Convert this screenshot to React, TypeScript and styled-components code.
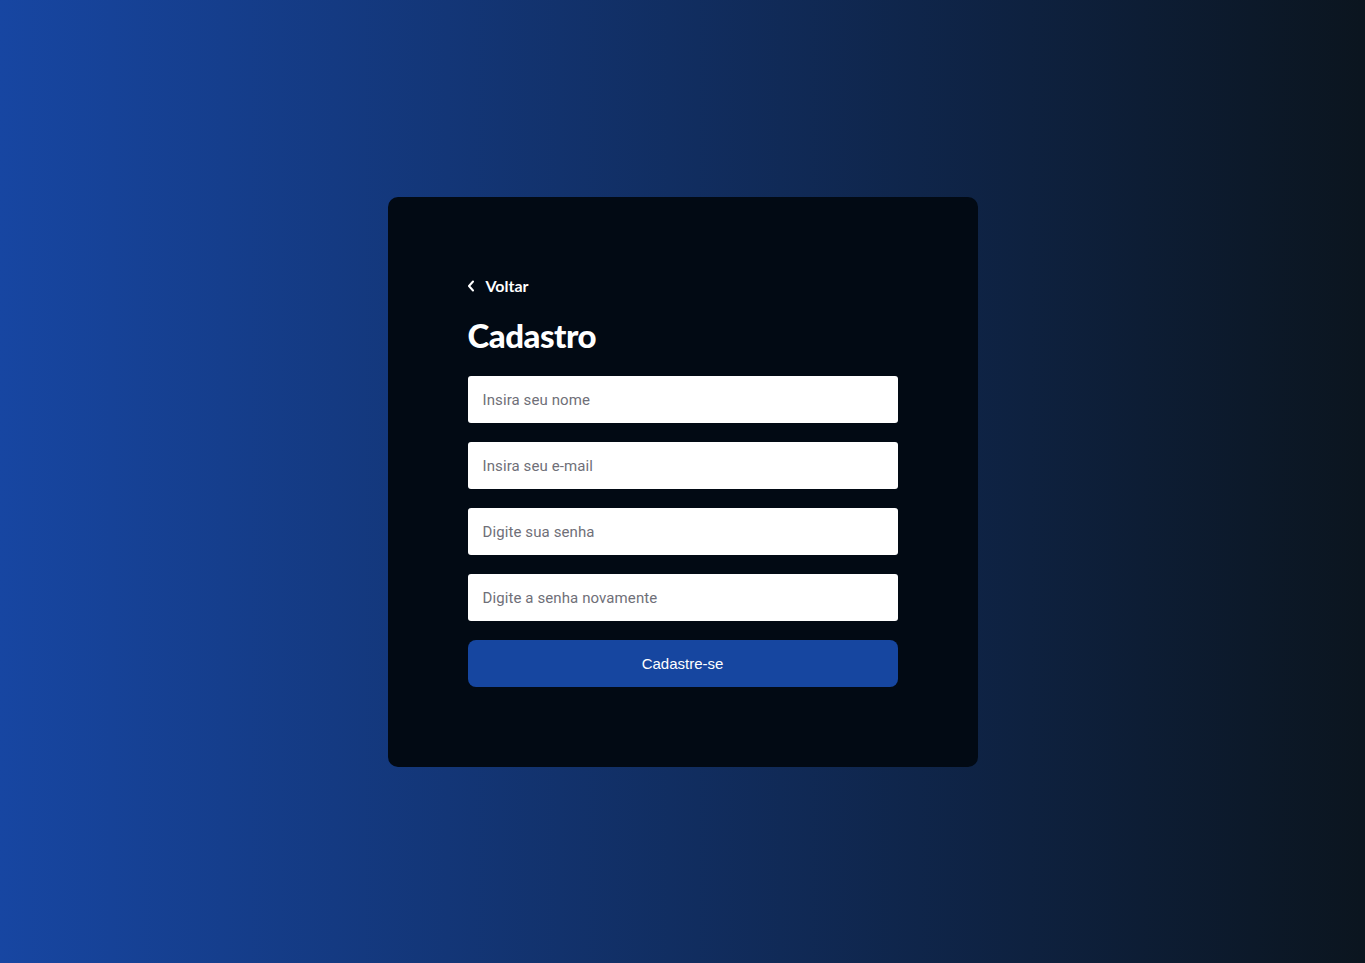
import React from "react";
import styled, { createGlobalStyle } from "styled-components";

const Global = createGlobalStyle`
  html, body { margin: 0; padding: 0; }
  body { font-family: "Roboto", "Liberation Sans", sans-serif; }
  * { box-sizing: border-box; }
`;

const Page = styled.main`
  width: 100vw;
  height: 100vh;
  display: flex;
  align-items: center;
  justify-content: center;
  background: linear-gradient(to right, #1746a2 0%, #0b151f 100%);
`;

const Card = styled.section`
  width: 590px;
  height: 570px;
  padding: 80px;
  background: #020a14;
  border-radius: 10px;
  display: flex;
  flex-direction: column;
`;

const Back = styled.a`
  display: flex;
  align-items: center;
  gap: 10px;
  color: #ffffff;
  font-family: "Lato", "Open Sans", sans-serif;
  font-weight: 700;
  font-size: 16px;
  line-height: 18px;
  text-decoration: none;
  cursor: pointer;
`;

const Title = styled.h1`
  margin: 20px 0 21px;
  color: #ffffff;
  font-family: "Lato", "Open Sans", sans-serif;
  font-weight: 900;
  font-size: 33px;
  line-height: 40px;
  letter-spacing: -0.5px;
`;

const Form = styled.form`
  display: flex;
  flex-direction: column;
  gap: 19px;
`;

const Input = styled.input`
  width: 100%;
  height: 47px;
  border: none;
  border-radius: 3px;
  padding: 2px 15px 0;
  background: #ffffff;
  font-family: "Roboto", "Liberation Sans", sans-serif;
  font-size: 15px;
  letter-spacing: 0.1px;
  color: #222;
  outline: none;
  &::placeholder { color: #6f6f78; }
`;

const Button = styled.button`
  height: 47px;
  border: none;
  border-radius: 8px;
  background: #1646a0;
  color: #ffffff;
  font-family: "Liberation Sans", Arial, sans-serif;
  font-size: 15px;
  cursor: pointer;
`;

const Chevron = () => (
  <svg width="8" height="12" viewBox="0 0 8 12" fill="none">
    <path d="M5 1.5L1 6l4 4.5" stroke="#fff" strokeWidth="2" strokeLinecap="round" strokeLinejoin="round" />
  </svg>
);

export default function App() {
  return (
    <>
      <Global />
      <Page>
        <Card>
          <Back>
            <Chevron />
            Voltar
          </Back>
          <Title>Cadastro</Title>
          <Form onSubmit={(e) => e.preventDefault()}>
            <Input placeholder="Insira seu nome" />
            <Input placeholder="Insira seu e-mail" />
            <Input type="password" placeholder="Digite sua senha" />
            <Input type="password" placeholder="Digite a senha novamente" />
            <Button type="submit">Cadastre-se</Button>
          </Form>
        </Card>
      </Page>
    </>
  );
}
